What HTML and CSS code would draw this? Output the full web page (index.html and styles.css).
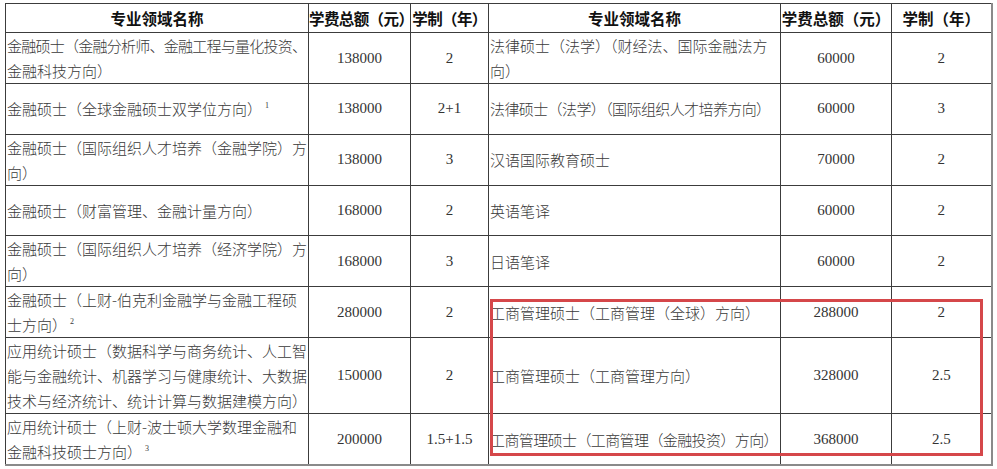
FILE: index.html
```html
<!DOCTYPE html>
<html lang="zh-CN">
<head>
<meta charset="utf-8">
<title>学费</title>
<link rel="stylesheet" href="styles.css">
</head>
<body>
<div class="wrap">
  <table class="fees">
    <colgroup>
      <col class="c-name"><col class="c-fee"><col class="c-yr">
      <col class="c-name2"><col class="c-fee2"><col class="c-yr2">
    </colgroup>
    <thead>
      <tr class="head">
        <th>专业领域名称</th>
        <th class="tight">学费总额（元）</th>
        <th class="tight">学制（年）</th>
        <th>专业领域名称</th>
        <th>学费总额（元）</th>
        <th>学制（年）</th>
      </tr>
    </thead>
    <tbody>
      <tr class="r2">
        <td class="name"><span class="squeeze">金融硕士（金融分析师、金融工程与量化投资、</span><br>金融科技方向）</td>
        <td class="num">138000</td><td class="num">2</td>
        <td class="name">法律硕士（法学）（财经法、国际金融法方<br>向）</td>
        <td class="num">60000</td><td class="num">2</td>
      </tr>
      <tr class="r2">
        <td class="name">金融硕士（全球金融硕士双学位方向）<sup>1</sup></td>
        <td class="num">138000</td><td class="num">2+1</td>
        <td class="name"><span class="fit">法律硕士（法学）（国际组织人才培养方向）</span></td>
        <td class="num">60000</td><td class="num">3</td>
      </tr>
      <tr class="r2">
        <td class="name">金融硕士（国际组织人才培养（金融学院）方<br>向）</td>
        <td class="num">138000</td><td class="num">3</td>
        <td class="name">汉语国际教育硕士</td>
        <td class="num">70000</td><td class="num">2</td>
      </tr>
      <tr class="r2">
        <td class="name">金融硕士（财富管理、金融计量方向）</td>
        <td class="num">168000</td><td class="num">2</td>
        <td class="name">英语笔译</td>
        <td class="num">60000</td><td class="num">2</td>
      </tr>
      <tr class="r2">
        <td class="name">金融硕士（国际组织人才培养（经济学院）方<br>向）</td>
        <td class="num">168000</td><td class="num">3</td>
        <td class="name">日语笔译</td>
        <td class="num">60000</td><td class="num">2</td>
      </tr>
      <tr class="r2">
        <td class="name">金融硕士（上财-伯克利金融学与金融工程硕<br>士方向）<sup>2</sup></td>
        <td class="num">280000</td><td class="num">2</td>
        <td class="name">工商管理硕士（工商管理（全球）方向）</td>
        <td class="num">288000</td><td class="num">2</td>
      </tr>
      <tr class="r3">
        <td class="name">应用统计硕士（数据科学与商务统计、人工智<br>能与金融统计、机器学习与健康统计、大数据<br>技术与经济统计、统计计算与数据建模方向）</td>
        <td class="num">150000</td><td class="num">2</td>
        <td class="name">工商管理硕士（工商管理方向）</td>
        <td class="num">328000</td><td class="num">2.5</td>
      </tr>
      <tr class="r2 last">
        <td class="name">应用统计硕士（上财-波士顿大学数理金融和<br>金融科技硕士方向）<sup>3</sup></td>
        <td class="num">200000</td><td class="num">1.5+1.5</td>
        <td class="name"><span class="fit">工商管理硕士（工商管理（金融投资）方向）</span></td>
        <td class="num">368000</td><td class="num">2.5</td>
      </tr>
    </tbody>
  </table>
  <div class="mark"></div>
</div>
</body>
</html>
```

FILE: styles.css
```css
html, body {
  margin: 0;
  padding: 0;
  background: #ffffff;
}

.wrap {
  position: relative;
  padding: 3px 0 0 5px;
  width: 997px;
  height: 469px;
  box-sizing: border-box;
  overflow: hidden;
}

.fees {
  border-collapse: collapse;
  table-layout: fixed;
  width: 986px;
  font-family: "Noto Sans CJK SC", "Noto Sans", sans-serif;
  font-size: 15px;
  color: #3a3a3a;
}

.c-name { width: 303px; }
.c-fee { width: 102px; }
.c-yr { width: 78px; }
.c-name2 { width: 292px; }
.c-fee2 { width: 111px; }
.c-yr2 { width: 100px; }

.fees th,
.fees td {
  border: 1px solid #3c3c3c;
  padding: 0;
  overflow: hidden;
  white-space: nowrap;
}

.fees th:last-child,
.fees td:last-child {
  border-right: 2px solid #8a8a8a;
}

.fees tr.last td {
  border-bottom: 2px solid #8a8a8a;
}

.head th {
  height: 28px;
  font-weight: 700;
  font-size: 15.5px;
  color: #111;
  text-align: center;
  line-height: 20px;
}

.head th.tight {
  letter-spacing: -0.6px;
  overflow: visible;
}

.r2 td { height: 49.5px; }
.r3 td { height: 75px; }

.name {
  text-align: left;
  vertical-align: middle;
  line-height: 25px;
  font-weight: 300;
  padding-left: 1px !important;
}

.squeeze {
  letter-spacing: -0.75px;
}

.fit {
  letter-spacing: -0.6px;
}

.name sup {
  font-size: 8px;
  line-height: 0;
  vertical-align: 7px;
  margin-left: 3px;
  font-family: "Liberation Serif", serif;
}

.num {
  text-align: center;
  vertical-align: middle;
  font-family: "Liberation Serif", "Times New Roman", serif;
  font-size: 15px;
  color: #333;
}

.mark {
  position: absolute;
  left: 490px;
  top: 299px;
  width: 493px;
  height: 157px;
  border: 3px solid #d5474a;
  box-sizing: border-box;
  pointer-events: none;
}
```
